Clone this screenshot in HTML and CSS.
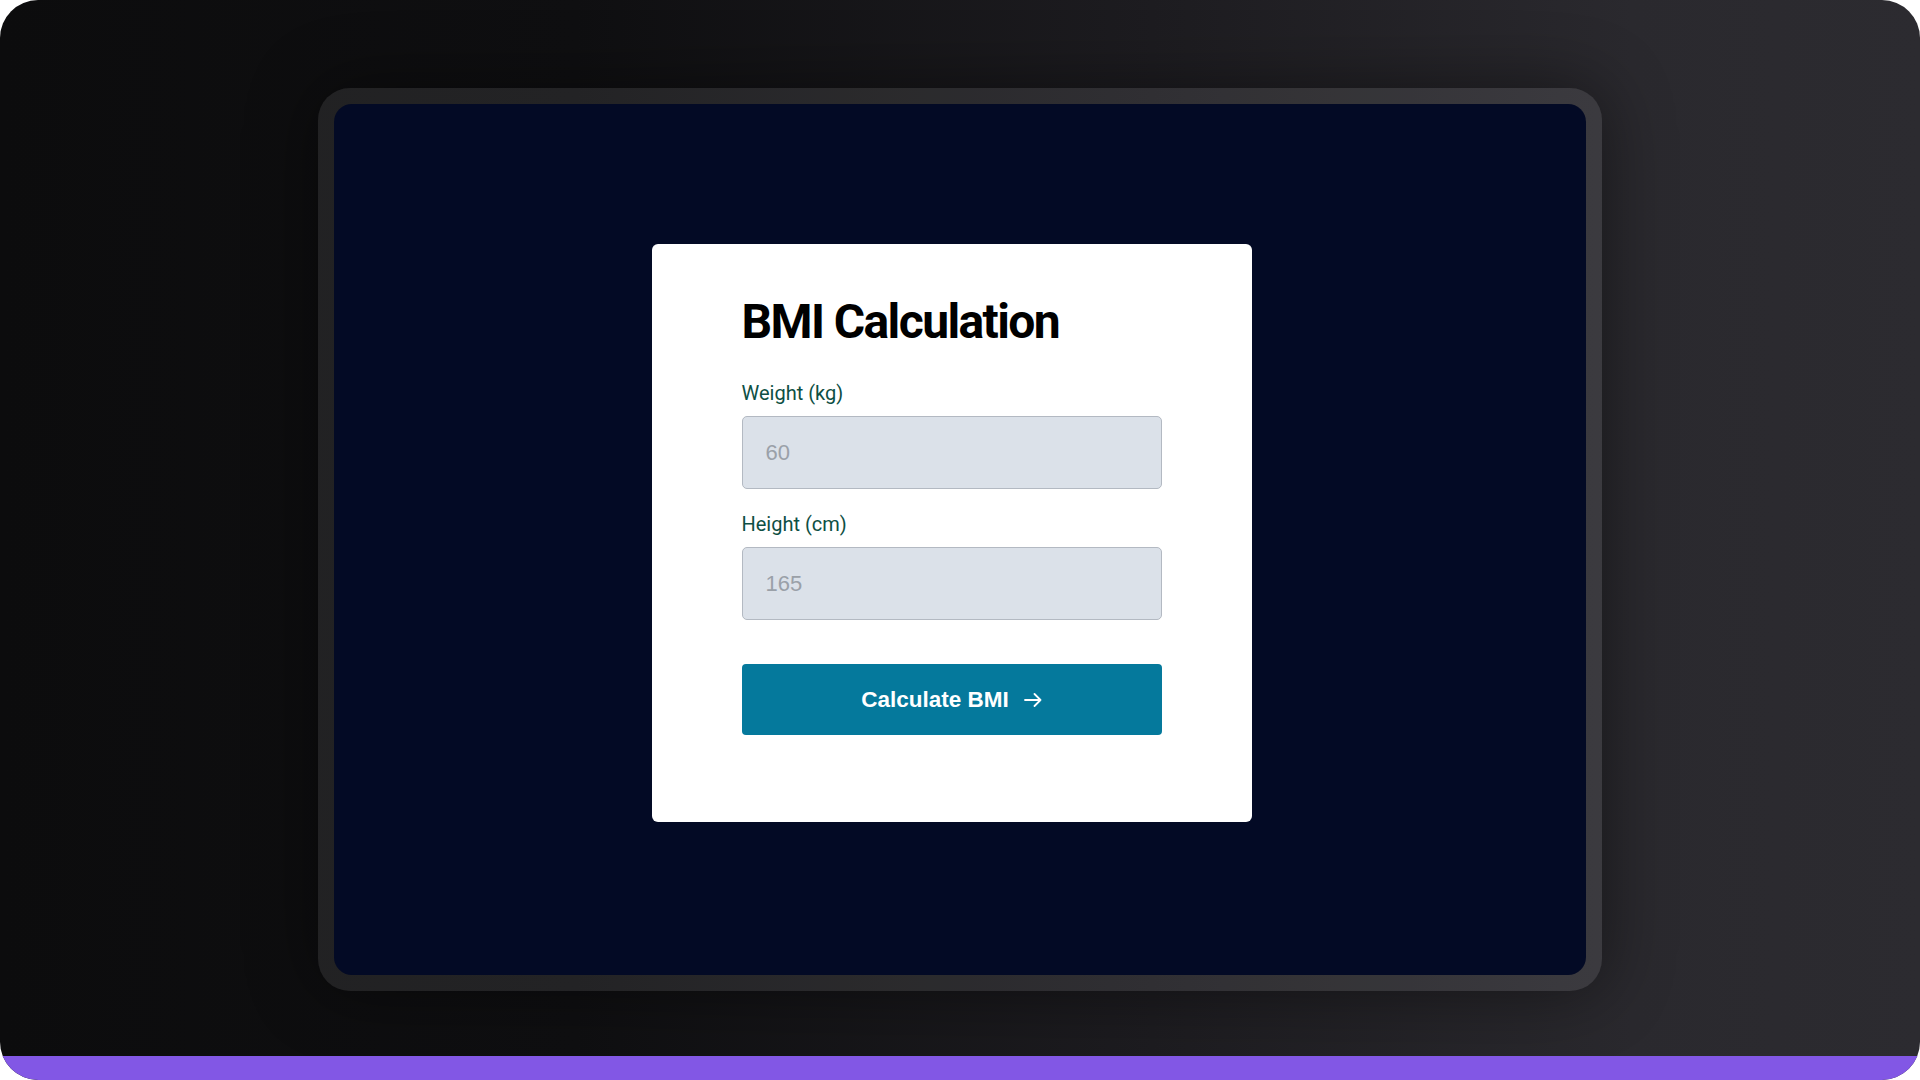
FILE: index.html
```html
<!DOCTYPE html>
<html lang="en">
<head>
<meta charset="utf-8">
<title>BMI Calculation</title>
<link rel="stylesheet" href="styles.css">
</head>
<body>
<div class="stage">
  <main class="stage-main">
    <div class="device">
      <div class="screen">
        <form class="card">
          <h1 class="card-title">BMI Calculation</h1>
          <div class="field">
            <label class="field-label" for="weight">Weight (kg)</label>
            <input class="field-input" id="weight" type="text" placeholder="60">
          </div>
          <div class="field">
            <label class="field-label" for="height">Height (cm)</label>
            <input class="field-input" id="height" type="text" placeholder="165">
          </div>
          <button class="submit" type="button">
            <span>Calculate BMI</span>
            <svg class="submit-icon" width="18" height="14" viewBox="0 0 18 14" fill="none" stroke="#ffffff" stroke-width="1.8" stroke-linecap="round" stroke-linejoin="round"><path d="M1 7h15.5M10.5 1l6 6-6 6"/></svg>
          </button>
        </form>
      </div>
    </div>
  </main>
  <div class="stage-bar"></div>
</div>
</body>
</html>
```
FILE: styles.css
```css
* { box-sizing: border-box; }
html, body { margin: 0; padding: 0; background: #ffffff; }
body { width: 1920px; height: 1080px; overflow: hidden; font-family: Roboto, "Liberation Sans", Arial, sans-serif; }

.stage {
  width: 1920px;
  height: 1080px;
  border-radius: 38px;
  overflow: hidden;
  display: flex;
  flex-direction: column;
  background: linear-gradient(90deg, #0c0c0d 0%, #0f0f11 30%, #1d1c20 60%, #2a292e 85%, #2c2b30 100%);
}

.stage-main {
  flex: 1;
  display: flex;
  justify-content: center;
  align-items: flex-start;
  padding-top: 88px;
}

.stage-bar {
  height: 24px;
  background: #8257e5;
}

.device {
  width: 1284px;
  height: 903px;
  padding: 16px;
  border-radius: 32px;
  background: rgba(255, 255, 255, 0.085);
  box-shadow: 0 0 70px rgba(0, 0, 0, 0.45);
}

.screen {
  width: 100%;
  height: 100%;
  border-radius: 18px;
  background: #030a25;
  display: flex;
  justify-content: center;
  align-items: flex-start;
  padding: 140px 17px 0 0;
}

.card {
  width: 600px;
  height: 578px;
  background: #ffffff;
  border-radius: 6px;
  padding: 50px 90px 0 90px;
  display: flex;
  flex-direction: column;
}

.card-title {
  margin: 0 0 31px 0;
  font-family: Roboto, "Liberation Sans", sans-serif;
  font-weight: 700;
  font-size: 48px;
  line-height: 56px;
  letter-spacing: -1.6px;
  color: #000000;
}

.field {
  display: flex;
  flex-direction: column;
  margin-bottom: 23px;
}

.field-label {
  font-family: Roboto, "Liberation Sans", sans-serif;
  font-size: 20px;
  line-height: 24px;
  color: #0e4f44;
  margin-bottom: 11px;
}

.field-input {
  width: 420px;
  height: 73px;
  border: 1.5px solid #b3b9c2;
  border-radius: 5px;
  background: #dbe1e9;
  padding: 0 0 0 23px;
  font-family: "Liberation Sans", Arial, sans-serif;
  font-size: 22px;
  color: #333333;
  outline: none;
}

.field-input::placeholder { color: #9aa0a8; }

.submit {
  margin-top: 21px;
  width: 420px;
  height: 71px;
  border: none;
  border-radius: 4px;
  background: #05799c;
  color: #ffffff;
  font-family: "Liberation Sans", Arial, sans-serif;
  font-weight: 700;
  font-size: 22.5px;
  display: flex;
  align-items: center;
  justify-content: center;
  gap: 15px;
  padding: 0;
  cursor: pointer;
}

.submit-icon { display: block; margin-top: 1px; }
```
